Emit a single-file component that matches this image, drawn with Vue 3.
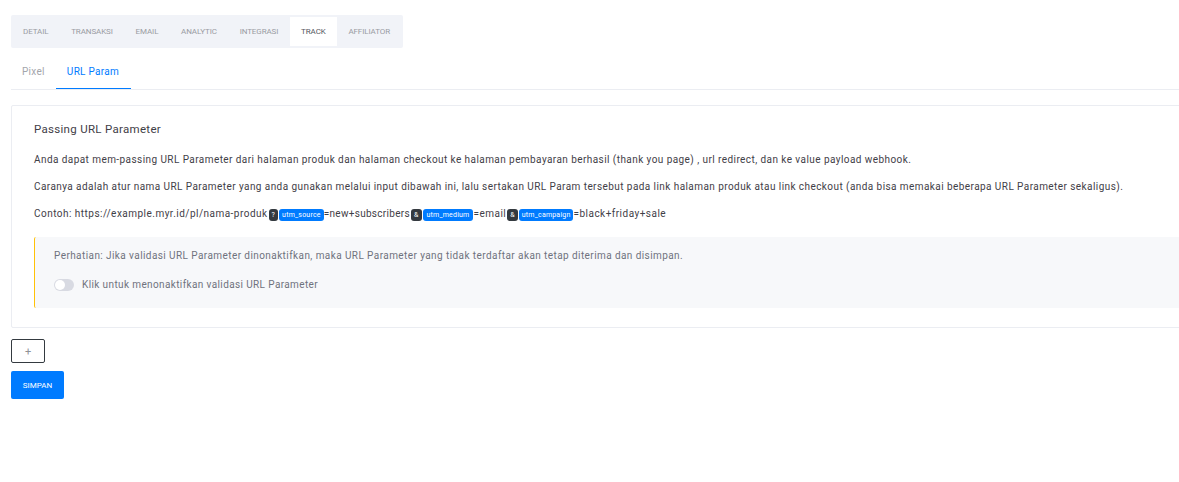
<script setup>
const tabs = ['DETAIL', 'TRANSAKSI', 'EMAIL', 'ANALYTIC', 'INTEGRASI', 'TRACK', 'AFFILIATOR']
</script>

<template>
  <div class="page">
    <ul class="tabs">
      <li v-for="t in tabs" :key="t" class="tab" :class="{ active: t === 'TRACK' }">{{ t }}</li>
    </ul>
    <div class="subnav">
      <span class="sub">Pixel</span>
      <span class="sub on">URL Param</span>
    </div>
    <section class="card">
      <h5 class="title">Passing URL Parameter</h5>
      <p class="line">Anda dapat mem-passing URL Parameter dari halaman produk dan halaman checkout ke halaman pembayaran berhasil (thank you page) , url redirect, dan ke value payload webhook.</p>
      <p class="line">Caranya adalah atur nama URL Parameter yang anda gunakan melalui input dibawah ini, lalu sertakan URL Param tersebut pada link halaman produk atau link checkout (anda bisa memakai beberapa URL Parameter sekaligus).</p>
      <p class="line example">Contoh: https://example.myr.id/pl/nama-produk<span class="badge dark">?</span><span class="badge blue">utm_source</span><span class="tight">=new+subscribers</span><span class="badge dark">&amp;</span><span class="badge blue wide">utm_medium</span>=email<span class="badge dark">&amp;</span><span class="badge blue">utm_campaign</span>=black+friday+sale</p>
      <div class="notice">
        <p class="note">Perhatian: Jika validasi URL Parameter dinonaktifkan, maka URL Parameter yang tidak terdaftar akan tetap diterima dan disimpan.</p>
        <label class="toggle">
          <span class="switch"><span class="knob"></span></span>
          <span>Klik untuk menonaktifkan validasi URL Parameter</span>
        </label>
      </div>
    </section>
    <button class="add" type="button">+</button>
    <button class="save" type="button">SIMPAN</button>
  </div>
</template>

<style>
html, body { margin: 0; background: #fff; overflow: hidden; }
</style>

<style scoped>
.page {
  width: 1400px;
  box-sizing: border-box;
  padding: 15px 0 0 11px;
  font-family: Roboto, "Noto Sans", sans-serif;
  font-size: 10px;
  color: #3f4047;
  display: flex;
  flex-direction: column;
  align-items: flex-start;
}
.tabs {
  list-style: none;
  margin: 0;
  padding: 2px 2px 2px 1px;
  display: flex;
  justify-content: space-between;
  width: 392px;
  height: 33px;
  box-sizing: border-box;
  background: #f1f3f8;
  border-radius: 2px;
}
.tab {
  padding: 0 11px;
  line-height: 29px;
  font-size: 8px;
  letter-spacing: -0.1px;
  color: #9a9ca3;
}
.tab.active { background: #fff; color: #575962; }
.subnav {
  align-self: stretch;
  display: flex;
  border-bottom: 1px solid #ebedf2;
  height: 41px;
}
.sub {
  padding: 0 11px;
  line-height: 47px;
  height: 41px;
  font-size: 10px;
  letter-spacing: 0.3px;
  color: #a3a5ab;
  box-sizing: border-box;
}
.sub.on { padding-right: 12px; color: #007bff; border-bottom: 1px solid #007bff; }
.card {
  align-self: stretch;
  margin-top: 15px;
  height: 223px;
  box-sizing: border-box;
  padding: 15px 22px;
  border: 1px solid #ebedf2;
  border-radius: 2px;
}
.title {
  margin: 0 0 16px;
  font-size: 11.5px;
  line-height: 16px;
  font-weight: 400;
  letter-spacing: 0.3px;
  color: #3f4047;
}
.line {
  margin: 0 0 13px;
  line-height: 14px;
  font-size: 10px;
  letter-spacing: 0.43px;
  white-space: nowrap;
}
.example { letter-spacing: 0.48px; }
.tight { letter-spacing: 0.3px; }
.badge {
  display: inline-block;
  height: 12px;
  line-height: 12px;
  border-radius: 3px;
  padding: 0 3px;
  font-size: 7px;
  letter-spacing: 0.2px;
  color: #fff;
  vertical-align: -0.4px;
}
.dark { background: #343a40; margin-left: 1px; }
.blue { background: #007bff; margin-left: 1px; }
.wide { padding: 0 4px; }
.notice {
  margin-top: 16px;
  height: 71px;
  box-sizing: border-box;
  padding: 12px 19px;
  background: #f7f8fa;
  border-left: 1px solid #ffc107;
  border-radius: 2px;
  color: #6f727d;
}
.note {
  margin: 0 0 15px;
  line-height: 14px;
  letter-spacing: 0.42px;
  white-space: nowrap;
}
.toggle {
  display: flex;
  align-items: center;
  gap: 8px;
  letter-spacing: 0.38px;
  line-height: 14px;
}
.switch {
  width: 20px;
  height: 12px;
  background: #d8dae2;
  border-radius: 6px;
  display: block;
}
.knob {
  display: block;
  width: 10px;
  height: 10px;
  margin: 1px;
  background: #fff;
  border-radius: 50%;
}
.add {
  margin-top: 11px;
  width: 34px;
  height: 24px;
  padding: 0;
  background: #fff;
  border: 1px solid #343a40;
  border-radius: 2px;
  color: #8f9196;
  font: 400 11px Roboto, sans-serif;
}
.save {
  margin-top: 8px;
  width: 53px;
  height: 28px;
  padding: 0;
  background: #007bff;
  border: 0;
  border-radius: 2px;
  color: #fff;
  font: 400 8px Roboto, sans-serif;
}
</style>
